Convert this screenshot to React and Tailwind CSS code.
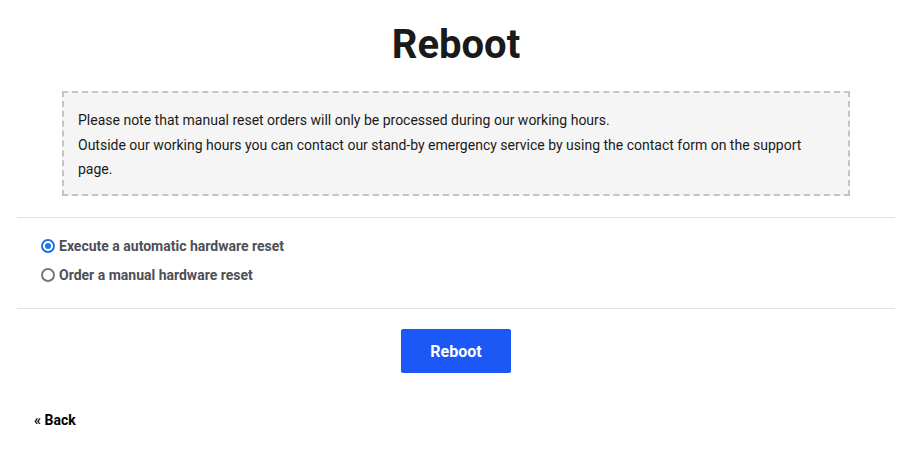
import * as React from "react";
import { useState } from "react";

const options = [
  { id: "auto", label: "Execute a automatic hardware reset" },
  { id: "manual", label: "Order a manual hardware reset" },
];

function App() {
  const [choice, setChoice] = useState("auto");

  return (
    <div className="min-h-[456px] bg-white font-['Roboto',sans-serif] text-[#1a1a1a]">
      <div className="ml-[17px] w-[878px]">
        <h1 className="pt-[19px] text-center text-[40px] font-bold leading-[52px]">Reboot</h1>

        <section className="mx-[45px] mt-[20px] border-2 border-dashed border-[#c4c4c4] bg-[#f5f5f5] px-[14px] pb-[12px] pt-[15px] text-[14px] leading-[24.5px]">
          <p>Please note that manual reset orders will only be processed during our working hours.</p>
          <p>
            Outside our working hours you can contact our stand-by emergency service by using the contact form on the
            support page.
          </p>
        </section>

        <hr className="mt-[21px] border-t border-[#e3e3e3]" />

        <section className="flex flex-col gap-[9px] px-[24px] pb-[23px] pt-[18px]">
          {options.map((option) => (
            <label key={option.id} className="flex cursor-pointer items-center gap-[4px] text-[14px] font-bold leading-[20px] text-[#4d4f57]">
              <span
                className={
                  choice === option.id
                    ? "flex h-[14px] w-[14px] items-center justify-center rounded-full border-2 border-[#1a73e8] bg-white"
                    : "flex h-[14px] w-[14px] items-center justify-center rounded-full border-2 border-[#76767a] bg-white"
                }
              >
                {choice === option.id && <span className="h-[6px] w-[6px] rounded-full bg-[#1a73e8]" />}
              </span>
              <input
                type="radio"
                name="reset"
                className="hidden"
                checked={choice === option.id}
                onChange={() => setChoice(option.id)}
              />
              {option.label}
            </label>
          ))}
        </section>

        <hr className="border-t border-[#e3e3e3]" />

        <div className="flex justify-center pt-[20px]">
          <button className="h-[44px] w-[110px] rounded-[2px] bg-[#1c58f5] pt-[3px] text-[16px] font-bold text-white">Reboot</button>
        </div>

        <a href="#" className="ml-[17px] mt-[37px] inline-block text-[14px] font-bold text-black">
          « Back
        </a>
      </div>
    </div>
  );
}

export default App;
